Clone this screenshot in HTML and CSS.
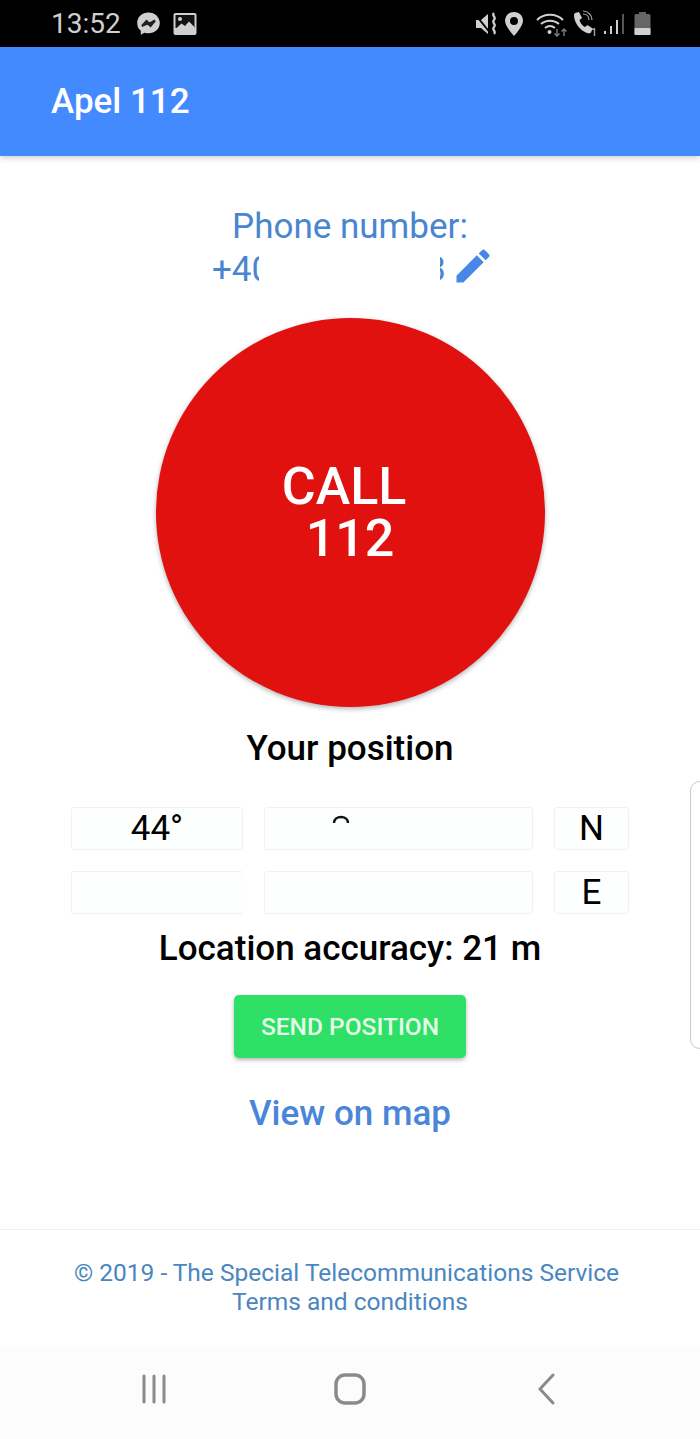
FILE: index.html
```html
<!DOCTYPE html>
<html>
<head>
    <title>Apel 112</title>
    <link rel="stylesheet" href="styles.css">
</head>
<body>
    <div class="page">
        <div class="status-bar">
            <div class="status-left">
                <span class="clock">13:52</span>
                <svg class="icon-messenger" width="25" height="25" viewBox="0 0 25 25">
                    <path fill="#d0d0d0" d="M12.5 1.5C6 1.5 1.2 6 1.2 12c0 3.2 1.3 5.9 3.6 7.8v3.9l3.6-2c1.3.4 2.6.6 4.1.6 6.5 0 11.300-4.500 11.300-10.300S19 1.500 12.500 1.500z"/>
                    <path fill="none" stroke="#222" stroke-width="2.200" d="M6 15l4.500-5 3 2.800L19 9.500l-4.500 5.500-3-2.800z"/>
                </svg>
                <svg class="icon-picture" width="24" height="24" viewBox="0 0 24 24">
                    <rect x="0.500" y="1" width="23" height="22" rx="2" fill="#d0d0d0"/>
                    <rect x="2.500" y="3" width="19" height="13" fill="#111"/>
                    <circle cx="7" cy="7" r="2" fill="#d0d0d0"/>
                    <path fill="#d0d0d0" d="M2.500 17l6-5.500 3.500 2.500 4-4.500 5.500 5.500v3.500z"/>
                </svg>
            </div>
            <div class="status-right">
                <svg width="26" height="26" viewBox="0 0 26 26">
                    <path fill="#d0d0d0" d="M2 9h5l7-6v20l-7-6H2z"/>
                    <path fill="none" stroke="#000" stroke-width="2" d="M1 3l16 20"/>
                    <path fill="none" stroke="#d0d0d0" stroke-width="2.200" d="M20 2c-3 3 3 4 0 7s3 4 0 7 3 4 0 7"/>
                </svg>
                <svg width="20" height="26" viewBox="0 0 20 26">
                    <path fill="#d0d0d0" fill-rule="evenodd" d="M10 1C4.700 1 1 4.800 1 9.800 1 15.500 10 25 10 25s9-9.500 9-15.200C19 4.800 15.300 1 10 1zm0 5a4 4 0 1 1 0 8 4 4 0 0 1 0-8z"/>
                </svg>
                <svg class="icon-wifi" width="32" height="26" viewBox="0 0 32 26">
                    <g fill="none" stroke="#d0d0d0" stroke-width="2">
                        <path d="M1 9c7-7 19-7 26 0"/>
                        <path d="M5 13c5-4.500 13-4.500 18 0"/>
                        <path d="M9 17c3-2.500 7-2.500 10 0"/>
                    </g>
                    <circle cx="13.500" cy="21" r="2" fill="#d0d0d0"/>
                    <path fill="none" stroke="#777" stroke-width="1.500" d="M21 18v7m-2.500-2.500L21 25l2.500-2.500M28 25v-7m-2.500 2.500L28 18l2.500 2.500"/>
                </svg>
                <svg class="icon-call" width="27" height="28" viewBox="0 0 27 28">
                    <path fill="#d0d0d0" d="M3 3l4-1 3 6-2.500 2c.8 3 2.500 5.500 5.500 7l2.500-2 5 3.500-1.500 4c-1 1-2.500 1-4 .5C8 20.500 2.500 13 2 6c0-1.500.300-2.300 1-3z"/>
                    <g fill="none" stroke="#aaa" stroke-width="1.200">
                        <path d="M11 1c5 0 9 4 9 9"/>
                        <path d="M11 4c3.500 0 6 2.500 6 6"/>
                    </g>
                    <text x="19" y="26" class="sim-digit">1</text>
                </svg>
                <svg class="icon-signal" width="22" height="26" viewBox="0 0 22 26">
                    <rect x="1" y="20" width="2" height="3" fill="#d0d0d0"/>
                    <rect x="7" y="15" width="2" height="8" fill="#d0d0d0"/>
                    <rect x="13" y="9" width="2" height="14" fill="#d0d0d0"/>
                    <rect x="19" y="3" width="2" height="20" fill="#555"/>
                </svg>
                <svg width="17" height="26" viewBox="0 0 17 26">
                    <rect x="5" y="1" width="7" height="3" fill="#666"/>
                    <rect x="0.500" y="3" width="16" height="21" rx="1.500" fill="#666"/>
                    <rect x="0.500" y="17" width="16" height="7" rx="1" fill="#d0d0d0"/>
                </svg>
            </div>
        </div>

        <header class="app-bar">Apel 112</header>

        <main class="content">
            <div class="phone-label">Phone number:</div>
            <div class="phone-row">
                <span class="phone-part phone-start">+40</span>
                <span class="phone-gap"></span>
                <span class="phone-part phone-end">3</span>
                <svg class="icon-edit" width="44" height="44" viewBox="0 0 24 24">
                    <path fill="#4a86e8" d="M3 17.250V21h3.750L17.810 9.940l-3.750-3.750L3 17.250zM20.710 7.040c.39-.39.39-1.020 0-1.410l-2.340-2.340c-.39-.39-1.020-.39-1.410 0l-1.830 1.830 3.750 3.750 1.830-1.830z"/>
                </svg>
            </div>

            <button class="call-btn"><span class="call-word">CALL</span><br>112</button>

            <h2 class="position-title">Your position</h2>

            <div class="coords">
                <div class="field">44°</div>
                <div class="field">
                    <svg class="redacted-arc" width="18" height="10" viewBox="0 0 18 10">
                        <path fill="none" stroke="#111" stroke-width="2.500" d="M2 9c0-8 14-8 14 0"/>
                    </svg>
                </div>
                <div class="field">N</div>
                <div class="field field-open"></div>
                <div class="field"></div>
                <div class="field">E</div>
            </div>

            <div class="accuracy">Location accuracy: 21 m</div>

            <button class="send-btn">SEND POSITION</button>

            <a class="map-link">View on map</a>
        </main>

        <footer class="footer">
            <div class="footer-line">© 2019 - The Special Telecommunications Service</div>
            <div>Terms and conditions</div>
        </footer>

        <nav class="nav-bar">
            <svg width="30" height="30" viewBox="0 0 30 30">
                <path fill="none" stroke="#8a8a8a" stroke-width="3" stroke-linecap="round" d="M4 2v26M14 2v26M24 2v26"/>
            </svg>
            <svg class="icon-home" width="32" height="32" viewBox="0 0 32 32">
                <rect x="2" y="2" width="28" height="28" rx="9" fill="none" stroke="#8a8a8a" stroke-width="3.500"/>
            </svg>
            <svg width="20" height="32" viewBox="0 0 20 32">
                <path fill="none" stroke="#8a8a8a" stroke-width="3" stroke-linecap="round" stroke-linejoin="round" d="M16 2L3 16l13 14"/>
            </svg>
        </nav>

        <div class="edge-panel"></div>
    </div>
</body>
</html>
```

FILE: styles.css
```css
* {
    box-sizing: border-box;
}
body {
    margin: 0;
    font-family: Roboto, Arial, sans-serif;
    background: white;
}
.page {
    position: relative;
    display: flex;
    flex-direction: column;
    height: 1439px;
    overflow: hidden;
}
.status-bar {
    display: flex;
    justify-content: space-between;
    align-items: center;
    height: 47px;
    padding: 0 49px 0 51px;
    background: #000;
}
.status-left {
    display: flex;
    align-items: center;
}
.clock {
    color: #cfcfcf;
    font-size: 28px;
    margin-right: 15px;
}
.icon-picture {
    margin-left: 12px;
}
.status-right {
    display: flex;
    align-items: center;
    gap: 4px;
}
.icon-wifi {
    margin-left: 8px;
}
.icon-signal {
    margin-right: 5px;
}
.sim-digit {
    fill: #d0d0d0;
    font-size: 11px;
}
.app-bar {
    display: flex;
    align-items: center;
    height: 109px;
    padding-left: 51px;
    background: #448aff;
    color: white;
    font-size: 35px;
    font-weight: 500;
    box-shadow: 0 2px 6px rgba(0,0,0,0.2);
    position: relative;
}
.content {
    flex: 1;
    display: flex;
    flex-direction: column;
    align-items: center;
}
.phone-label {
    margin-top: 51px;
    color: #4a86d0;
    font-size: 35px;
    line-height: 40px;
}
.phone-row {
    display: flex;
    align-items: center;
    height: 45px;
    color: #4a86d0;
    font-size: 35px;
}
.phone-part {
    display: block;
    overflow: hidden;
    white-space: nowrap;
}
.phone-start {
    width: 47px;
}
.phone-gap {
    width: 181px;
}
.phone-end {
    width: 6px;
    direction: rtl;
}
.icon-edit {
    margin: -7px -7px 0 5px;
}
.call-btn {
    width: 389px;
    height: 389px;
    margin-top: 26px;
    border: none;
    border-radius: 50%;
    background: #e0110f;
    color: white;
    font-family: inherit;
    font-size: 52px;
    font-weight: 500;
    line-height: 52px;
    box-shadow: 0 2px 5px rgba(0,0,0,0.3);
}
.call-word {
    margin-right: 12px;
}
.position-title {
    margin: 22px 0 0;
    font-size: 35px;
    font-weight: 500;
    line-height: 40px;
    color: #000;
}
.coords {
    display: grid;
    grid-template-columns: 172px 269px 75px;
    grid-template-rows: 43px 43px;
    gap: 21px;
    margin-top: 38px;
}
.field {
    display: flex;
    justify-content: center;
    align-items: center;
    border: 1px solid #eff2f5;
    border-radius: 3px;
    background: #fdfefe;
    color: #000;
    font-size: 35px;
}
.field-open {
    border-right-color: transparent;
}
.redacted-arc {
    align-self: flex-start;
    margin: 6px 0 0 -115px;
}
.accuracy {
    margin-top: 15px;
    font-size: 35px;
    font-weight: 500;
    line-height: 40px;
    color: #000;
}
.send-btn {
    width: 232px;
    height: 63px;
    margin-top: 26px;
    padding-bottom: 2px;
    border: none;
    border-radius: 5px;
    background: #2ee065;
    color: #e4fbe9;
    font-family: inherit;
    font-size: 24.500px;
    font-weight: 500;
    box-shadow: 0 2px 4px rgba(0,0,0,0.3);
}
.map-link {
    margin-top: 36px;
    color: #4a86d8;
    font-size: 35px;
    font-weight: 500;
    line-height: 40px;
}
.footer {
    height: 118px;
    padding-top: 28px;
    border-top: 1px solid #eeeeee;
    color: #4a86c0;
    font-size: 24.500px;
    line-height: 29px;
    text-align: center;
}
.footer-line {
    padding-right: 7px;
}
.nav-bar {
    display: flex;
    justify-content: space-between;
    align-items: center;
    height: 92px;
    padding: 0 143px 8px 140px;
    background: #fcfcfc;
}
.icon-home {
    margin-left: -7px;
}
.edge-panel {
    position: absolute;
    top: 781px;
    right: -10px;
    width: 20px;
    height: 268px;
    border: 1.500px solid #c8c8c8;
    border-radius: 10px;
    background: white;
}
```
